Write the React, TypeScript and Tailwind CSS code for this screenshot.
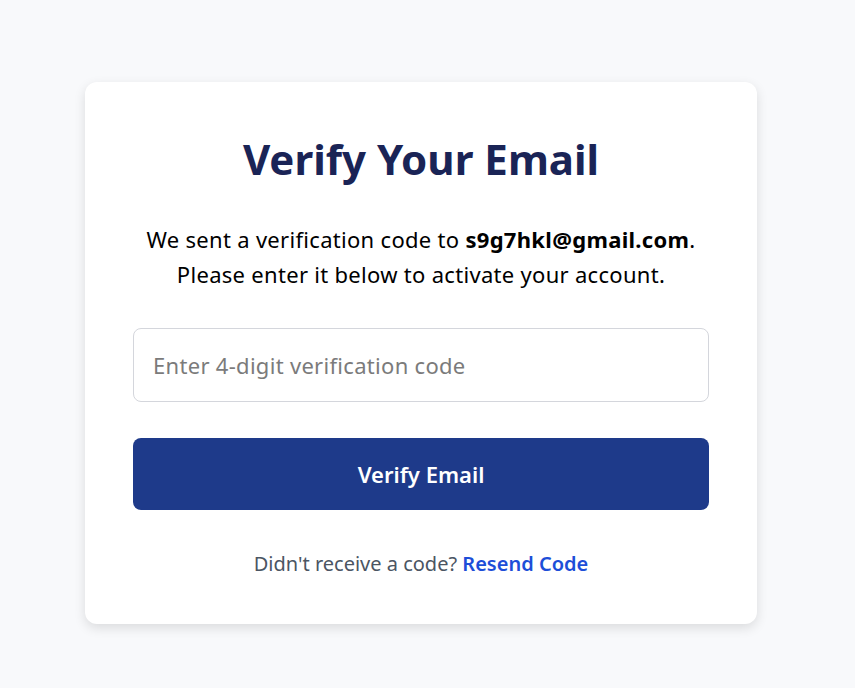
export default function App() {
  return (
    <div
      className="min-h-[688px] w-full bg-[#f8f9fb] flex justify-center pt-[82px] pr-[13px]"
      style={{ fontFamily: '"Noto Sans", "Open Sans", sans-serif' }}
    >
      <div className="w-[672px] h-[542px] bg-white rounded-xl shadow-[0_4px_12px_rgba(0,0,0,0.12)] px-12 pt-[48px] flex flex-col items-center">
        <h1 className="text-[42px] leading-[48px] font-bold text-[#1a2456] mt-[5px]">
          Verify Your Email
        </h1>
        <p className="mt-[39px] text-[22px] leading-[35px] text-black text-center tracking-[0.3px]">
          We sent a verification code to <strong className="font-bold">s9g7hkl@gmail.com</strong>.
          <br />
          Please enter it below to activate your account.
        </p>
        <input
          type="text"
          placeholder="Enter 4-digit verification code"
          className="mt-[36px] w-full h-[74px] border border-[#d4d6dc] rounded-lg px-[19px] text-[22px] placeholder:text-[#7b7b7b] outline-none tracking-[0.3px]"
        />
        <button className="mt-[36px] w-full h-[72px] bg-[#1e3a8a] rounded-lg text-white text-[22px] font-semibold">
          Verify Email
        </button>
        <p className="mt-[40px] text-[20px] leading-[27px] text-[#4b5563]">
          Didn't receive a code?{' '}
          <a className="text-[#1d4ed8] font-semibold">Resend Code</a>
        </p>
      </div>
    </div>
  );
}
